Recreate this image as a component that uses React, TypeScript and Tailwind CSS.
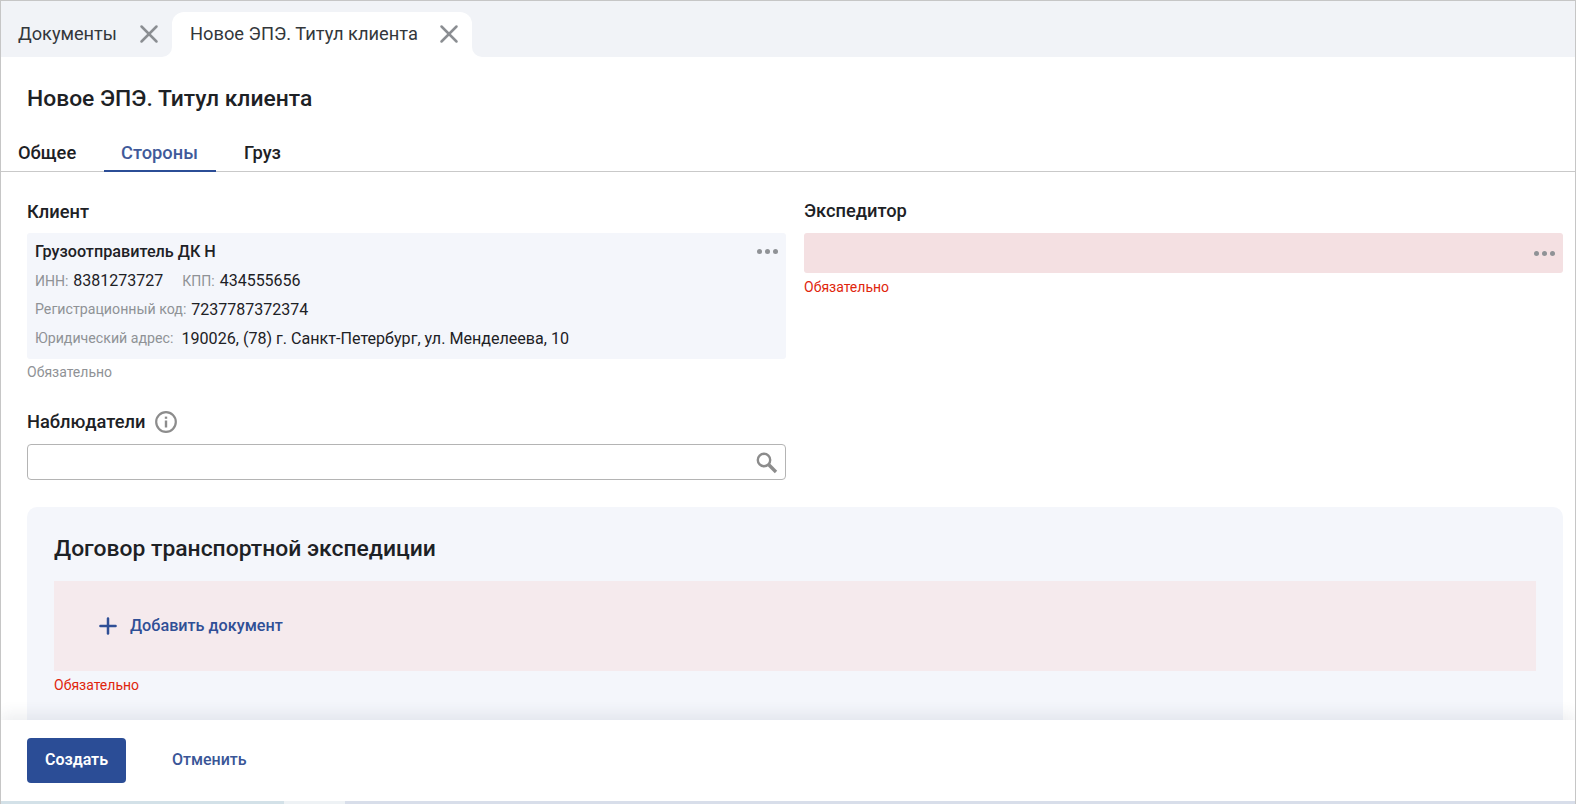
import { Plus, X } from 'lucide-react'

function Dots() {
  return (
    <div className="flex gap-[3px]">
      <span className="h-[5px] w-[5px] rounded-full bg-[#8f9296]" />
      <span className="h-[5px] w-[5px] rounded-full bg-[#8f9296]" />
      <span className="h-[5px] w-[5px] rounded-full bg-[#8f9296]" />
    </div>
  )
}

function Info() {
  return (
    <svg width="22" height="22" viewBox="0 0 22 22" fill="none">
      <circle cx="11" cy="11" r="9.8" stroke="#8c8c8c" strokeWidth="2.2" />
      <rect x="9.8" y="9.5" width="2.4" height="7" fill="#8c8c8c" />
      <rect x="9.8" y="5.6" width="2.4" height="2.2" fill="#8c8c8c" />
    </svg>
  )
}

function SearchIcon() {
  return (
    <svg width="24" height="24" viewBox="0 0 24 24" fill="none">
      <circle cx="9" cy="10" r="6.2" stroke="#8c8c8c" strokeWidth="2.4" />
      <path d="M13.8 14.8L21 22" stroke="#8c8c8c" strokeWidth="3.4" />
    </svg>
  )
}

export default function App() {
  return (
    <div className="flex h-[804px] w-[1576px] flex-col overflow-hidden border border-b-0 border-[#c6c6c6] bg-white font-['Roboto',sans-serif] text-[#1d2125]">
      {/* Tabs strip */}
      <div className="flex h-[56px] shrink-0 items-end bg-[#f1f3f7]">
        <div className="flex h-[45px] w-[171px] items-center pb-[2px] pl-[17px]">
          <span className="text-[18.2px] text-[#33373b]">Документы</span>
          <X className="ml-[17px] text-[#8b8e92]" size={30} strokeWidth={2} />
        </div>
        <div className="relative flex h-[45px] w-[300px] items-center rounded-t-[12px] bg-white pb-[2px] pl-[18px]">
          <div className="absolute bottom-0 left-[-10px] h-[10px] w-[10px] bg-white">
            <div className="h-full w-full rounded-br-[10px] bg-[#f1f3f7]" />
          </div>
          <span className="text-[18.3px] text-[#33373b]">Новое ЭПЭ. Титул клиента</span>
          <X className="ml-[16px] text-[#8b8e92]" size={30} strokeWidth={2} />
          <div className="absolute bottom-0 right-[-10px] h-[10px] w-[10px] bg-white">
            <div className="h-full w-full rounded-bl-[10px] bg-[#f1f3f7]" />
          </div>
        </div>
      </div>

      <h1 className="ml-[26px] mt-[27px] text-[22.85px] leading-[30px] font-medium">Новое ЭПЭ. Титул клиента</h1>

      {/* Section tabs */}
      <div className="mt-[24px] flex h-[34px] shrink-0 border-b border-[#c9c9c9] text-[18.3px] font-medium">
        <div className="ml-[17px] w-[86px] leading-[30px]">Общее</div>
        <div className="-mb-[1px] w-[112px] border-b-2 border-[#2b4d96] pl-[17px] leading-[30px] text-[#3f5a9a]">Стороны</div>
        <div className="ml-[28px] leading-[30px]">Груз</div>
      </div>

      {/* Content */}
      <div className="min-h-0 flex-1 overflow-hidden pl-[26px] pr-[12px] pt-[28px]">
        <div className="grid grid-cols-[759px_759px] gap-x-[18px]">
          <div>
            <div className="text-[18.3px] leading-[24px] font-medium">Клиент</div>
            <div className="relative mt-[9px] h-[126px] rounded-[3px] bg-[#f4f6fb] pl-[8px] pt-[8px]">
              <div className="absolute right-[8px] top-[16px]">
                <Dots />
              </div>
              <div className="text-[16.2px] leading-[22px] font-medium">Грузоотправитель ДК Н</div>
              <div className="mt-[7px] flex h-[22px] items-center text-[16px]">
                <span className="mr-[5px] text-[14px] text-[#8f9296]">ИНН:</span>8381273727
                <span className="ml-[19px] mr-[5px] text-[14px] text-[#8f9296]">КПП:</span>434555656
              </div>
              <div className="mt-[7px] flex h-[22px] items-center text-[16px]">
                <span className="mr-[5px] text-[14.2px] text-[#8f9296]">Регистрационный код:</span>7237787372374
              </div>
              <div className="mt-[7px] flex h-[22px] items-center text-[16.1px]">
                <span className="mr-[8px] text-[14.2px] text-[#8f9296]">Юридический адрес:</span>190026, (78) г. Санкт-Петербург, ул. Менделеева, 10
              </div>
            </div>
            <div className="mt-[4px] text-[14px] leading-[18px] text-[#8f9296]">Обязательно</div>
          </div>
          <div>
            <div className="-mt-[1px] text-[18.3px] leading-[24px] font-medium">Экспедитор</div>
            <div className="mt-[10px] flex h-[40px] items-center justify-end rounded-[3px] bg-[#f4e0e2] pr-[8px]">
              <Dots />
            </div>
            <div className="mt-[5px] text-[14px] leading-[18px] text-[#e0250c]">Обязательно</div>
          </div>
        </div>

        <div className="mt-[29px] flex h-[24px] items-center text-[18.3px] font-medium">
          Наблюдатели
          <span className="ml-[10px]">
            <Info />
          </span>
        </div>
        <div className="mt-[10px] flex h-[36px] w-[759px] items-center justify-end rounded-[4px] border border-[#b4b4b4] pr-[6px]">
          <SearchIcon />
        </div>

        <div className="mt-[27px] h-[240px] rounded-[10px] bg-[#f4f6fb] px-[27px] pt-[26px]">
          <h2 className="text-[22.9px] leading-[32px] font-medium">Договор транспортной экспедиции</h2>
          <div className="mt-[16px] flex h-[90px] items-center bg-[#f5eaed] pl-[41px] text-[#2f4f96]">
            <Plus size={26} strokeWidth={2.3} />
            <span className="ml-[9px] text-[16.2px] font-medium">Добавить документ</span>
          </div>
          <div className="mt-[5px] text-[14px] leading-[18px] text-[#e0250c]">Обязательно</div>
        </div>
      </div>

      {/* Footer */}
      <div className="relative flex h-[84px] shrink-0 items-start bg-white pl-[26px] pt-[18px] shadow-[0_-6px_14px_rgba(60,70,90,0.09)]">
        <button className="h-[45px] w-[99px] rounded-[4px] bg-[#2b4d96] pb-[1px] text-[16px] font-semibold text-white">Создать</button>
        <button className="ml-[46px] h-[45px] pb-[1px] text-[16px] font-medium text-[#3a5697]">Отменить</button>
        <div className="absolute inset-x-0 bottom-0 flex h-[3px]">
          <div className="w-[283px] bg-[#d3e1e8]" />
          <div className="w-[61px] bg-[#eef2f5]" />
          <div className="flex-1 bg-[#d8deea]" />
        </div>
      </div>
    </div>
  )
}
